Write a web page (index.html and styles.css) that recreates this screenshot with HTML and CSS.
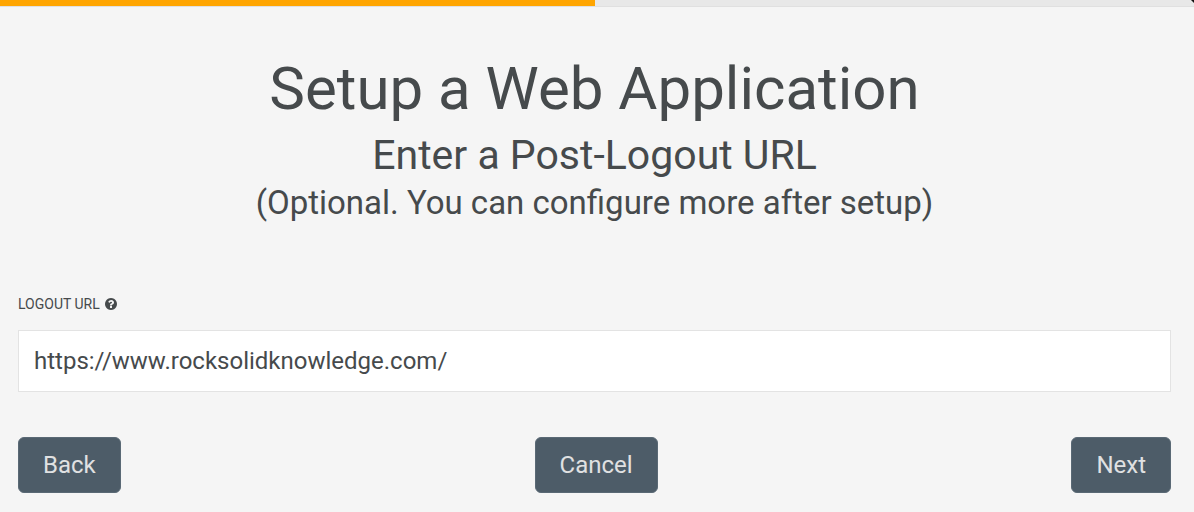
FILE: index.html
```
<!DOCTYPE html>
<html lang="en">
<head>
<meta charset="utf-8">
<title>Setup a Web Application</title>
<link rel="stylesheet" href="styles.css">
</head>
<body>
<div class="progress" role="progressbar" aria-label="Setup progress" aria-valuenow="50" aria-valuemin="0" aria-valuemax="100"><div class="progress-fill"></div></div>
<main class="wizard">
  <header class="heading">
    <h1 class="title">Setup a Web Application</h1>
    <h2 class="subtitle">Enter a Post-Logout URL</h2>
    <p class="hint">(Optional. You can configure more after setup)</p>
  </header>
  <form class="form">
    <label class="label" for="logout-url">LOGOUT URL
      <svg class="help" viewBox="0 0 1536 1536" aria-hidden="true"><path fill="currentColor" d="M896 1248v-192q0-14-9-23t-23-9H672q-14 0-23 9t-9 23v192q0 14 9 23t23 9h192q14 0 23-9t9-23zm256-672q0-88-55.500-163T958 297t-170-41q-243 0-371 213-15 24 8 42l132 100q7 6 19 6 16 0 25-12 53-68 86-92 34-24 86-24 48 0 85.500 26t37.500 59q0 38-20 61t-68 45q-63 28-115.500 86.500T640 892v36q0 14 9 23t23 9h192q14 0 23-9t9-23q0-19 21.500-49.500T972 829q32-18 49-28.500t46-35 44.500-48 28-60.500 12.500-81zm384 192q0 209-103 385.500T1153.500 1433 768 1536t-385.500-103T103 1153.500 0 768t103-385.500T382.500 103 768 0t385.500 103T1433 382.500 1536 768z"/></svg>
    </label>
    <input class="field" id="logout-url" type="text" value="https://www.rocksolidknowledge.com/">
    <div class="actions">
      <button class="button" type="button">Back</button>
      <button class="button" type="button">Cancel</button>
      <button class="button" type="button">Next</button>
    </div>
  </form>
</main>
</body>
</html>
```
FILE: styles.css
```
* {
  box-sizing: border-box;
}

body {
  margin: 0;
  background: #f5f5f5;
  color: #464a4c;
  font-family: Roboto, "Liberation Sans", sans-serif;
}

.progress {
  position: relative;
  height: 7px;
  background: #e8e8e8;
  border-bottom: 1px solid #e0e0e0;
}

/* Dark window corner */
.progress::after {
  content: "";
  position: absolute;
  top: 0;
  right: 0;
  width: 3px;
  height: 3px;
  background: #111;
  clip-path: polygon(0 0, 100% 0, 100% 100%);
}

.progress-fill {
  width: 49.8%;
  height: 6px;
  background: #ffa500;
}

.wizard {
  padding: 46px 23px 19px 18px;
}

.heading {
  text-align: center;
}

.title,
.subtitle,
.hint {
  margin: 0;
  font-weight: 400;
}

.title {
  font-size: 60px;
  line-height: 72px;
}

.subtitle {
  margin-top: 6px;
  font-size: 41px;
  line-height: 48px;
}

.hint {
  font-size: 33px;
  line-height: 48px;
}

.form {
  margin-top: 68px;
}

.label {
  display: flex;
  align-items: center;
  gap: 5px;
  font-size: 14px;
  line-height: 18px;
}

.help {
  width: 12px;
  height: 12px;
}

.field {
  display: block;
  width: 100%;
  height: 62px;
  margin-top: 17px;
  padding: 0 15px;
  border: 1px solid #e3e3e3;
  background: #fff;
  color: inherit;
  font: 24px Roboto, "Liberation Sans", sans-serif;
}

.actions {
  display: flex;
  justify-content: space-between;
  margin-top: 45px;
}

.button {
  height: 56px;
  padding: 0 24px;
  border: 1px solid #5a6975;
  border-radius: 6px;
  background: #4d5c68;
  color: #e0e1e2;
  font: 24px Roboto, "Liberation Sans", sans-serif;
}
```
